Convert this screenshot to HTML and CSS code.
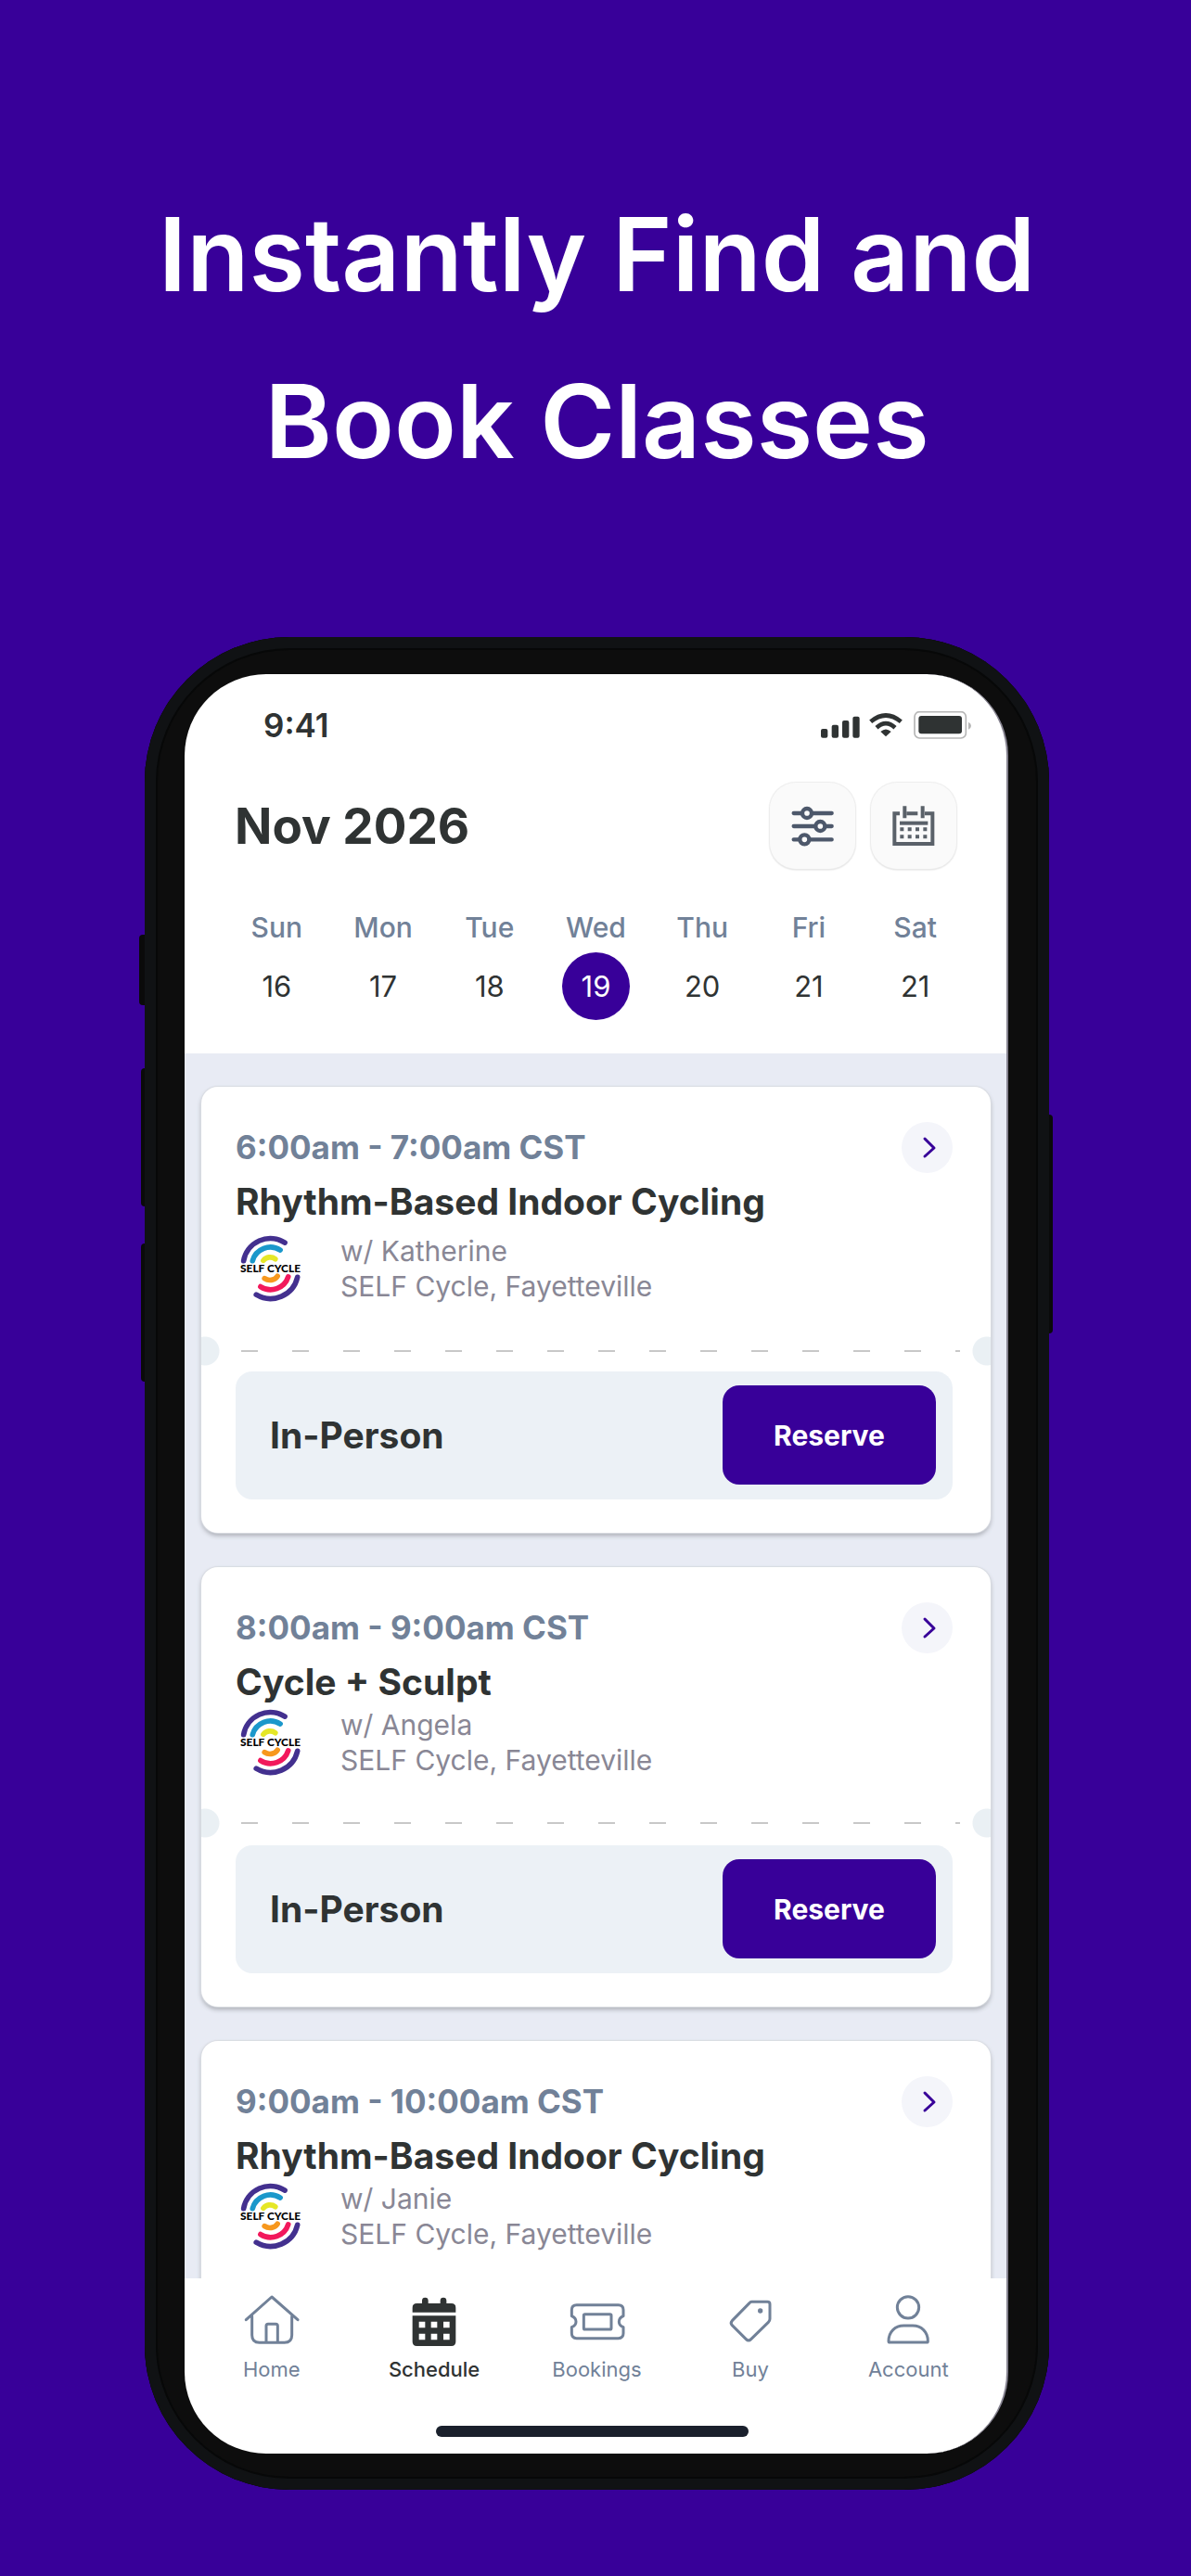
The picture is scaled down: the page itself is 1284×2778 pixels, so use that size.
FILE: index.html
```html
<!DOCTYPE html>
<html lang="en">
<head>
  <meta charset="UTF-8" />
  <meta name="viewport" content="width=device-width, initial-scale=1.0"/>
  <title>Instantly Find and Book Classes</title>
  <link rel="stylesheet" href="styles.css">
</head>
<body>

  <!-- shared drawings -->
  <svg class="sprite" aria-hidden="true">
    <symbol id="logo" viewBox="58 64 196 216">
      <g fill="none" stroke-width="17" stroke-linecap="round">
        <path stroke="#43308f" d="M69 147A88 88 0 0 1 203 88"/>
        <path stroke="#1b98cb" d="M98 147A60 60 0 0 1 188 112"/>
        <path stroke="#e5e727" d="M133 146A28 28 0 0 1 172 141"/>
        <path stroke="#f7981d" d="M179 197A30 30 0 0 1 137 204"/>
        <path stroke="#f2185c" d="M214 199A60 60 0 0 1 124 231"/>
        <path stroke="#43308f" d="M244 200A90 90 0 0 1 110 257"/>
      </g>
      <text class="logo-text" x="156" y="185" text-anchor="middle">SELF CYCLE</text>
    </symbol>
    <symbol id="chevron" viewBox="0 0 55 55">
      <path d="M25 18l10 10-10 9" fill="none" stroke="#380099" stroke-width="3" stroke-linecap="round" stroke-linejoin="round"/>
    </symbol>
  </svg>

  <h1 class="headline">Instantly Find and<br>Book Classes</h1>

  <div class="phone">
    <span class="side-key key-mute"></span>
    <span class="side-key key-up"></span>
    <span class="side-key key-down"></span>
    <span class="side-key key-power"></span>

    <div class="screen">
      <header class="top">
        <div class="status-bar">
          <span class="clock">9:41</span>
          <svg class="status-icons" viewBox="318 291 486 90" aria-hidden="true">
            <g fill="#2f3333">
              <rect x="318" y="348" width="22" height="29" rx="6"/>
              <rect x="353" y="335" width="22" height="42" rx="6"/>
              <rect x="387" y="321" width="22" height="56" rx="6"/>
              <rect x="421" y="308" width="22" height="69" rx="6"/>
              <path d="M511 357Q528 342 545 357L528 373z"/>
              <rect x="634" y="306" width="140" height="58" rx="9"/>
            </g>
            <g fill="none" stroke="#2f3333" stroke-width="14">
              <path d="M479 325Q528 284 577 325"/>
              <path d="M498 344Q528 317 558 344"/>
            </g>
            <rect x="621" y="293" width="166" height="85" rx="16" fill="none" stroke="#b6b6b6" stroke-width="5"/>
            <path d="M795 326q9 4 9 12t-9 12z" fill="#b6b6b6"/>
          </svg>
        </div>

        <div class="month-row">
          <h2 class="month">Nov 2026</h2>
          <button class="icon-button" type="button" aria-label="Filters">
            <svg class="filter-icon" viewBox="214 596 138 132">
              <g fill="none" stroke="#4d586b" stroke-width="13" stroke-linecap="round">
                <path d="M222 620H345M222 662H345M222 705H345"/>
                <circle cx="265" cy="620" r="15" fill="#fafafa"/>
                <circle cx="308" cy="662" r="15" fill="#fafafa"/>
                <circle cx="257" cy="705" r="15" fill="#fafafa"/>
              </g>
            </svg>
          </button>
          <button class="icon-button" type="button" aria-label="Calendar">
            <svg class="filter-icon" viewBox="545 596 138 132">
              <g fill="none" stroke="#5a6169" stroke-width="12">
                <path d="M569 621H552V719H675V621H650M591 621H627"/>
                <path d="M585 597V636M643 597V636"/>
                <path d="M569 652H660"/>
                <path d="M570 672H657M570 696H657" stroke-dasharray="12 13"/>
              </g>
            </svg>
          </button>
        </div>

        <div class="week">
          <div class="day"><span class="day-name">Sun</span><button class="day-number" type="button">16</button></div>
          <div class="day"><span class="day-name">Mon</span><button class="day-number" type="button">17</button></div>
          <div class="day"><span class="day-name">Tue</span><button class="day-number" type="button">18</button></div>
          <div class="day"><span class="day-name">Wed</span><button class="day-number selected" type="button">19</button></div>
          <div class="day"><span class="day-name">Thu</span><button class="day-number" type="button">20</button></div>
          <div class="day"><span class="day-name">Fri</span><button class="day-number" type="button">21</button></div>
          <div class="day"><span class="day-name">Sat</span><button class="day-number" type="button">21</button></div>
        </div>
      </header>

      <main class="class-list">
        <article class="card card-first">
          <div class="card-top">
            <p class="time">6:00am - 7:00am CST</p>
            <a class="details" href="#" aria-label="Class details"><svg><use href="#chevron"/></svg></a>
          </div>
          <h3 class="class-name">Rhythm-Based Indoor Cycling</h3>
          <div class="studio">
            <svg class="logo"><use href="#logo"/></svg>
            <p>w/ Katherine<br>SELF Cycle, Fayetteville</p>
          </div>
          <div class="tear"></div>
          <div class="booking">
            <span class="booking-type">In-Person</span>
            <button class="reserve" type="button">Reserve</button>
          </div>
        </article>

        <article class="card">
          <div class="card-top">
            <p class="time">8:00am - 9:00am CST</p>
            <a class="details" href="#" aria-label="Class details"><svg><use href="#chevron"/></svg></a>
          </div>
          <h3 class="class-name">Cycle + Sculpt</h3>
          <div class="studio">
            <svg class="logo"><use href="#logo"/></svg>
            <p>w/ Angela<br>SELF Cycle, Fayetteville</p>
          </div>
          <div class="tear"></div>
          <div class="booking">
            <span class="booking-type">In-Person</span>
            <button class="reserve" type="button">Reserve</button>
          </div>
        </article>

        <article class="card">
          <div class="card-top">
            <p class="time">9:00am - 10:00am CST</p>
            <a class="details" href="#" aria-label="Class details"><svg><use href="#chevron"/></svg></a>
          </div>
          <h3 class="class-name">Rhythm-Based Indoor Cycling</h3>
          <div class="studio">
            <svg class="logo"><use href="#logo"/></svg>
            <p>w/ Janie<br>SELF Cycle, Fayetteville</p>
          </div>
        </article>
      </main>

      <nav class="tab-bar">
        <a class="tab" href="#">
          <svg viewBox="219 163 180 168">
            <path d="M226 246L309 172L393 246M245 234V296Q245 320 269 320H350Q374 320 374 296V234M291 320V266Q291 260 297 260H322Q328 260 328 266V320"/>
          </svg>
          Home
        </a>
        <a class="tab active" href="#">
          <svg viewBox="745 163 180 168">
            <path class="solid" d="M765 222V207Q765 193 779 193H796V184a10 10 0 0 1 20 0V193H855V184a10 10 0 0 1 20 0V193H891Q905 193 905 207V222z"/>
            <path class="solid" fill-rule="evenodd" d="M765 233H905V317Q905 331 891 331H779Q765 331 765 317zM786 252v20h20v-20zM825 252v20h20v-20zM865 252v20h20v-20zM786 291v20h20v-20zM825 291v20h20v-20zM865 291v20h20v-20z"/>
          </svg>
          Schedule
        </a>
        <a class="tab" href="#">
          <svg viewBox="1270 163 180 168">
            <path d="M1293 198H1428Q1444 198 1444 214V234Q1430 240 1430 252T1444 270V290Q1444 306 1428 306H1293Q1277 306 1277 290V270Q1291 264 1291 252T1277 234V214Q1277 198 1293 198z"/>
            <rect x="1316" y="228" width="89" height="49" rx="4"/>
          </svg>
          Bookings
        </a>
        <a class="tab" href="#">
          <svg viewBox="419 163 180 168">
            <path d="M513 188H564Q572 188 572 196V243Q572 249 567 254L511 309Q503 317 495 309L450 264Q443 257 450 249L506 192Q509 188 513 188z"/>
            <circle class="solid" cx="541" cy="217" r="8"/>
          </svg>
          Buy
        </a>
        <a class="tab" href="#">
          <svg viewBox="933 163 180 168">
            <circle cx="1023" cy="206" r="35"/>
            <path d="M964 319Q960 319 960 315C960 285 981 265 1009 265H1038C1066 265 1087 285 1087 315Q1087 319 1083 319z"/>
          </svg>
          Account
        </a>
      </nav>
      <div class="home-indicator"></div>
    </div>
  </div>

</body>
</html>
```
FILE: styles.css
```css
* {
  box-sizing: border-box;
}

body {
  margin: 0;
  padding: 184px 153px 93px 156px;
  background: #380099;
  color: #2f3333;
  font-family: Inter, "Liberation Sans", sans-serif;
}

h1, h2, h3, p {
  margin: 0;
}

button {
  padding: 0;
  border: none;
  font-family: inherit;
  color: inherit;
  cursor: pointer;
}

a {
  color: inherit;
  text-decoration: none;
}

.sprite {
  display: none;
}

.headline {
  margin-bottom: 143px;
  color: #fff;
  font-size: 110px;
  font-weight: 600;
  line-height: 180px;
  text-align: center;
}

/* phone body */
.phone {
  position: relative;
  padding: 40px 44px 39px 43px;
  border-radius: 156px;
  background: #0d0d0d;
  box-shadow: inset 0 0 0 12px #101214, inset 0 0 0 14px #070808;
}

.side-key {
  position: absolute;
  left: -4px;
  width: 4px;
  background: #0a0a0a;
  border-radius: 4px 0 0 4px;
}

.key-mute {
  top: 321px;
  left: -6px;
  width: 6px;
  height: 76px;
}

.key-up {
  top: 465px;
  height: 149px;
}

.key-down {
  top: 654px;
  height: 149px;
}

.key-power {
  top: 515px;
  left: auto;
  right: -4px;
  height: 236px;
  border-radius: 0 4px 4px 0;
}

.screen {
  display: flex;
  flex-direction: column;
  aspect-ratio: 888 / 1919;
  overflow: hidden;
  border-radius: 88px;
  border-right: 2px solid #85828f;
  background: #fff;
}

/* status bar, month and week */
.top {
  flex: none;
  padding: 34px 38px 36px 42px;
}

.status-bar {
  display: flex;
  align-items: center;
  justify-content: space-between;
  margin-bottom: 41px;
  padding-left: 43px;
}

.clock {
  font-size: 35px;
  font-weight: 600;
  line-height: 42px;
}

.status-icons {
  width: 162px;
  height: 30px;
}

.month-row {
  display: flex;
  align-items: center;
  gap: 17px;
  margin-bottom: 45px;
  padding: 0 16px 0 12px;
}

.month {
  flex: 1;
  font-size: 53px;
  font-weight: 700;
}

.icon-button {
  display: flex;
  align-items: center;
  justify-content: center;
  width: 92px;
  height: 93px;
  border-radius: 28px;
  background: #fafafa;
  box-shadow: 0 0 1px 1px #ededed, 0 1px 2px #c8c8c8;
}

.filter-icon {
  width: 46px;
  height: 44px;
}

.week {
  display: grid;
  grid-template-columns: repeat(7, 1fr);
  padding-right: 3px;
}

.day {
  display: flex;
  flex-direction: column;
  align-items: center;
  gap: 9px;
}

.day-name {
  color: #718198;
  font-size: 30px;
  font-weight: 500;
  line-height: 36px;
}

.day-number {
  width: 73px;
  height: 73px;
  border-radius: 50%;
  background: none;
  font-size: 31px;
}

.day-number.selected {
  background: #380099;
  color: #fff;
}

/* class cards */
.class-list {
  flex: 1;
  display: flex;
  flex-direction: column;
  gap: 37px;
  min-height: 0;
  overflow: hidden;
  padding: 36px 17px 0 18px;
  background: #e8ebf4;
}

.card {
  flex: none;
  padding: 37px 41px 36px 37px;
  border-radius: 18px;
  background: #fff;
  box-shadow: 0 0 1px 1px #d9dce2, 0 3px 5px #a8abb3;
}

.card:last-child {
  padding-bottom: 80px;
}

.card-top {
  display: flex;
  align-items: center;
  justify-content: space-between;
}

.time {
  color: #718198;
  font-size: 35px;
  font-weight: 700;
  line-height: 56px;
}

.details {
  width: 55px;
  height: 55px;
  border-radius: 50%;
  background: #f4f5fa;
}

.details svg {
  display: block;
  width: 55px;
  height: 55px;
}

.class-name {
  margin-top: 7px;
  font-size: 39px;
  font-weight: 700;
  line-height: 48px;
}

.studio {
  display: flex;
  align-items: center;
  gap: 43px;
  margin-top: 3px;
  padding-left: 5px;
  color: #898795;
  font-size: 30px;
  line-height: 38px;
}

.card-first .studio {
  margin-top: 10px;
}

.logo {
  width: 65px;
  height: 72px;
}

.logo-text {
  fill: #000;
  font-family: Lato, sans-serif;
  font-size: 36px;
  font-weight: 900;
}

/* perforated line with a notch at both card edges */
.tear {
  height: 32px;
  margin: 33px -41px 8px -37px;
  background:
    radial-gradient(circle 16px at 4px 50%, #eaf0f4 15px, transparent 16px) 0 0 / 20px 100% no-repeat,
    radial-gradient(circle 16px at 16px 50%, #eaf0f4 15px, transparent 16px) 100% 0 / 20px 100% no-repeat,
    repeating-linear-gradient(90deg, #c8c8c8 0 18px, transparent 18px 55px) 43px 50% / calc(100% - 76px) 2px no-repeat;
}

.card-first .tear {
  margin-top: 35px;
  margin-bottom: 6px;
}

.booking {
  display: flex;
  align-items: center;
  justify-content: space-between;
  padding: 15px 18px 16px 37px;
  border-radius: 18px;
  background: #ecf1f6;
}

.booking-type {
  font-size: 39px;
  font-weight: 700;
}

.reserve {
  width: 230px;
  height: 107px;
  border-radius: 18px;
  background: #380099;
  color: #fff;
  font-size: 30px;
  font-weight: 700;
}

/* bottom navigation */
.tab-bar {
  flex: none;
  display: grid;
  grid-template-columns: 35fr 35fr 35fr 31fr 37fr;
  padding: 17px 13px 0 6px;
}

.tab {
  display: flex;
  flex-direction: column;
  align-items: center;
  gap: 11px;
  color: #718198;
  font-size: 22px;
  line-height: 28px;
}

.tab svg {
  width: 60px;
  height: 56px;
  fill: none;
  stroke: currentColor;
  stroke-width: 9;
  stroke-linecap: round;
  stroke-linejoin: round;
}

.tab .solid {
  fill: currentColor;
  stroke: none;
}

.tab.active {
  color: #2f3333;
  font-weight: 500;
}

.home-indicator {
  flex: none;
  height: 12px;
  margin: 47px 278px 18px 271px;
  border-radius: 6px;
  background: #1a202c;
}
```
